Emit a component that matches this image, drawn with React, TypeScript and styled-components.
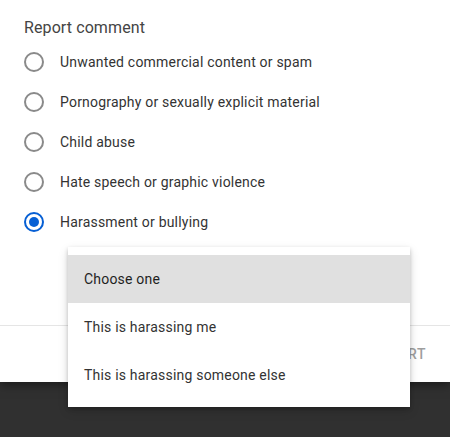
import React from "react";
import styled, { createGlobalStyle } from "styled-components";

const Global = createGlobalStyle`
  html, body {
    margin: 0;
    padding: 0;
    background: #303030;
    overflow: hidden;
    font-family: Roboto, "Noto Sans", Arial, sans-serif;
  }
`;

const Page = styled.div`
  position: relative;
  width: 450px;
  height: 437px;
`;

const Dialog = styled.div`
  background: #fff;
  height: 382px;
  display: flex;
  flex-direction: column;
  box-shadow: 0 2px 10px rgba(0, 0, 0, 0.5);
`;

const Body = styled.div`
  flex: 1;
  padding: 17px 24px 0;
`;

const Title = styled.h2`
  margin: 0;
  font-size: 16px;
  font-weight: 400;
  line-height: 22px;
  letter-spacing: 0.1px;
  color: #444;
  height: 25px;
`;

const Options = styled.div`
  display: flex;
  flex-direction: column;
`;

const Option = styled.label`
  display: flex;
  align-items: center;
  height: 40px;
  gap: 16px;
  font-size: 14px;
  letter-spacing: 0.2px;
  color: #333;
  cursor: pointer;
`;

const Radio = styled.span<{ $checked?: boolean }>`
  width: 20px;
  height: 20px;
  box-sizing: border-box;
  border-radius: 50%;
  border: 2px solid ${(p) => (p.$checked ? "#065fd4" : "#8a8a8a")};
  display: flex;
  align-items: center;
  justify-content: center;
  flex-shrink: 0;
  &::after {
    content: "";
    display: ${(p) => (p.$checked ? "block" : "none")};
    width: 10px;
    height: 10px;
    border-radius: 50%;
    background: #065fd4;
  }
`;

const Footer = styled.div`
  height: 56px;
  border-top: 1px solid #e5e5e5;
  display: flex;
  align-items: center;
  justify-content: flex-end;
  padding: 0 16px;
  gap: 8px;
`;

const TextButton = styled.button`
  background: none;
  border: none;
  padding: 0 8px;
  height: 36px;
  font-family: inherit;
  font-size: 14px;
  font-weight: 500;
  letter-spacing: 0.5px;
  color: #9e9e9e;
  text-transform: uppercase;
`;

const Menu = styled.ul`
  position: absolute;
  left: 68px;
  top: 247px;
  width: 342px;
  margin: 0;
  padding: 8px 0;
  list-style: none;
  background: #fff;
  box-shadow: 0 2px 4px rgba(0, 0, 0, 0.2), 0 4px 10px rgba(0, 0, 0, 0.14);
`;

const MenuItem = styled.li<{ $active?: boolean }>`
  height: 48px;
  display: flex;
  align-items: center;
  padding: 0 16px;
  font-size: 14px;
  letter-spacing: 0.2px;
  color: ${(p) => (p.$active ? "#1f1f1f" : "#333")};
  background: ${(p) => (p.$active ? "#e0e0e0" : "transparent")};
`;

const reasons = [
  "Unwanted commercial content or spam",
  "Pornography or sexually explicit material",
  "Child abuse",
  "Hate speech or graphic violence",
  "Harassment or bullying",
];

const choices = ["Choose one", "This is harassing me", "This is harassing someone else"];

export default function App() {
  return (
    <Page>
      <Global />
      <Dialog>
        <Body>
          <Title>Report comment</Title>
          <Options>
            {reasons.map((r, i) => (
              <Option key={r}>
                <Radio $checked={i === 4} />
                {r}
              </Option>
            ))}
          </Options>
        </Body>
        <Footer>
          <TextButton>Cancel</TextButton>
          <TextButton>Report</TextButton>
        </Footer>
      </Dialog>
      <Menu>
        {choices.map((c, i) => (
          <MenuItem key={c} $active={i === 0}>
            {c}
          </MenuItem>
        ))}
      </Menu>
    </Page>
  );
}
